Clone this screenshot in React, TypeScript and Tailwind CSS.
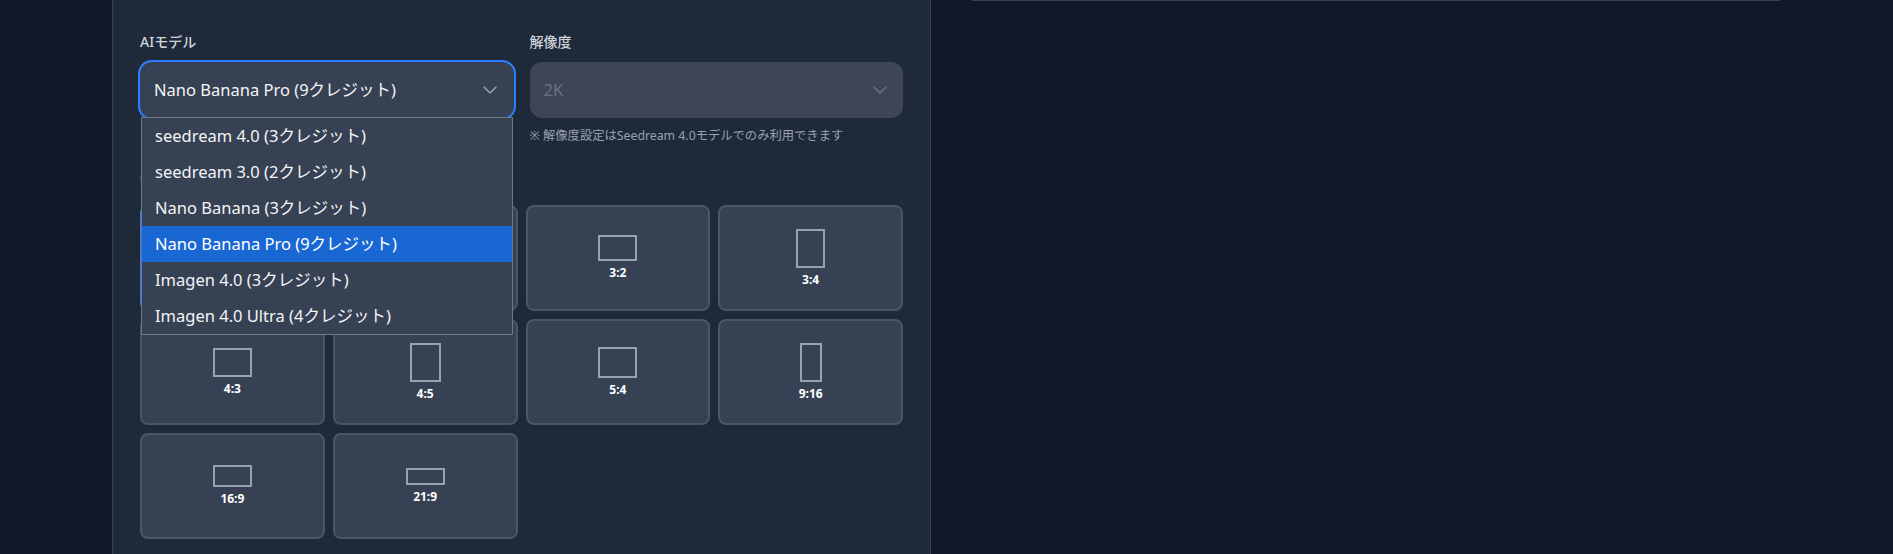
import React from "react";
import { ChevronDown, Ratio } from "lucide-react";

const models = [
  "seedream 4.0 (3クレジット)",
  "seedream 3.0 (2クレジット)",
  "Nano Banana (3クレジット)",
  "Nano Banana Pro (9クレジット)",
  "Imagen 4.0 (3クレジット)",
  "Imagen 4.0 Ultra (4クレジット)",
];

const ratios: { label: string; box: string }[] = [
  { label: "1:1", box: "w-[39px] h-[39px]" },
  { label: "2:3", box: "w-[26px] h-[39px]" },
  { label: "3:2", box: "w-[39px] h-[26px]" },
  { label: "3:4", box: "w-[29px] h-[39px]" },
  { label: "4:3", box: "w-[39px] h-[29px]" },
  { label: "4:5", box: "w-[31px] h-[39px]" },
  { label: "5:4", box: "w-[39px] h-[31px]" },
  { label: "9:16", box: "w-[22px] h-[39px]" },
  { label: "16:9", box: "w-[39px] h-[22px]" },
  { label: "21:9", box: "w-[39px] h-[17px]" },
];

export default function App() {
  return (
    <div className="flex min-h-[554px] w-full bg-[#111827] font-['Noto_Sans','Noto_Sans_CJK_JP',sans-serif]">
      <div className="w-[112px] shrink-0" />
      <div className="w-[819px] shrink-0 border-x border-gray-700 bg-gray-800 px-[27px] pt-[32px]">
        <div className="grid grid-cols-2 gap-4">
          <div>
            <div className="mb-[10px] text-sm leading-5 font-medium text-gray-300">AIモデル</div>
            <div className="relative">
              <div className="flex h-[56px] items-center justify-between rounded-xl bg-gray-700 pl-[14px] pr-3 text-[16.5px] text-gray-100 ring-2 ring-blue-500">
                <span>Nano Banana Pro (9クレジット)</span>
                <ChevronDown size={24} strokeWidth={1.5} className="text-gray-400" />
              </div>
              <div className="absolute left-[1px] right-[1px] top-[55px] z-10 border border-[#71767f] bg-gray-700">
                {models.map((m) => (
                  <div
                    key={m}
                    className={
                      m === "Nano Banana Pro (9クレジット)"
                        ? "flex h-9 items-center bg-[#1967d2] pl-[13px] text-[16.5px] text-white"
                        : "flex h-9 items-center pl-[13px] text-[16.5px] text-gray-100"
                    }
                  >
                    {m}
                  </div>
                ))}
              </div>
            </div>
          </div>
          <div>
            <div className="mb-[10px] text-sm leading-5 font-medium text-gray-300">解像度</div>
            <div className="flex h-[56px] items-center justify-between rounded-xl bg-[#3e4655] pl-[14px] pr-[11px] text-[16.5px] text-gray-500">
              <span>2K</span>
              <ChevronDown size={24} strokeWidth={1.5} className="text-gray-500" />
            </div>
            <div className="mt-[10px] text-[12.3px] leading-4 text-gray-400">
              ※ 解像度設定はSeedream 4.0モデルでのみ利用できます
            </div>
          </div>
        </div>
        <div className="mt-[25px]">
          <div className="mb-4 flex items-center gap-2 text-sm leading-5 font-medium text-gray-300">
            <Ratio size={16} className="text-blue-500" />
            <span>アスペクト比</span>
          </div>
          <div className="grid grid-cols-4 gap-2">
            {ratios.map((r, i) => (
              <div
                key={r.label}
                className={
                  i === 0
                    ? "flex h-[106px] flex-col items-center justify-center rounded-lg border-2 border-blue-500 bg-blue-500/20"
                    : "flex h-[106px] flex-col items-center justify-center rounded-lg border-2 border-gray-600 bg-gray-700"
                }
              >
                <div className={`${r.box} border-2 border-gray-400`} />
                <div className="mt-1 text-xs leading-4 font-bold text-white">{r.label}</div>
              </div>
            ))}
          </div>
        </div>
      </div>
      <div className="flex-1 pl-[41px]">
        <div className="h-px w-[808px] rounded-b bg-gray-700" />
      </div>
    </div>
  );
}
